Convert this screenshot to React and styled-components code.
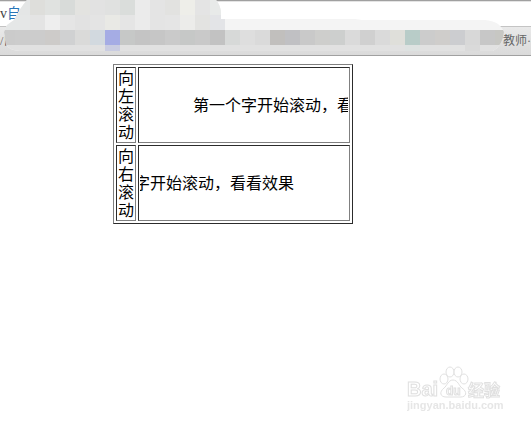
import styled, { createGlobalStyle } from "styled-components";

const GlobalStyle = createGlobalStyle`
  body {
    margin: 0;
    background: #fff;
    overflow: hidden;
  }
`;

const rows = [
  { name: "向左滚动", start: 53 },
  { name: "向右滚动", start: -54 },
];

const message = "第一个字开始滚动，看看效果";

const tileRows = [
  [
    "#e4e6e6", "#e4e6e6", "#dededb", "#e0e2e0", "#d8dbd9", "#e3e3e0", "#e2e2e2",
    "#e0e1e0", "#dadddb", "#ebebeb", "#e4e4e4", "#e2e2e0", "#eeeee9", "#e4e4e4",
    "#e8eae9",
  ],
  [
    "#e5e7e7", "#e5e7e7", "#e4e4e4", "#eeeeee", "#e5e5e5", "#e2e2e2", "#e4e4e4",
    "#e9e9e5", "#e5e5e5", "#ebebeb", "#e4e4e4", "#e5e5e5", "#ececea", "#e3e3e1",
    "#e3e4e7",
  ],
  [
    "#cbcbcb", "#cccccc", "#cccccc", "#cdcbc9", "#d0d1d2", "#dadad9", "#d2d9df",
    "#a5ace4", "#c6c8c7", "#c4c4c4", "#c6c6c6", "#cacaca", "#c6c8c7", "#c9c9c9",
    "#c2c2c2", "#d7d9d8", "#dedede", "#dadada", "#c1bfbd", "#c0c0c3", "#c9c9c9",
    "#cececc", "#cdcfce", "#dadada", "#d0d0d0", "#dadada", "#dfdfda", "#b8ccc8",
    "#cccccc", "#cfcdcb", "#cccdd0", "#d8d8d8", "#c7c7c7", "#c7c7c3",
  ],
];

function App() {
  return (
    <>
      <GlobalStyle />
      <Browser>
        <AddressBar>v<Blue>自</Blue></AddressBar>
        <Bookmarks>
          <span>/自</span>
          <span>教师·</span>
        </Bookmarks>
        <Mosaic />
      </Browser>
      <Content>
        <ScrollTable>
          <tbody>
            {rows.map((row) => (
              <tr key={row.name}>
                <NameCell scope="row">{row.name}</NameCell>
                <TextCell>
                  <Track>
                    <Message $start={row.start}>{message}</Message>
                  </Track>
                </TextCell>
              </tr>
            ))}
          </tbody>
        </ScrollTable>
      </Content>
      <Watermark />
    </>
  );
}

function Mosaic() {
  return (
    <MosaicArt viewBox="0 0 531 56" aria-hidden="true">
      <clipPath id="smear">
        <path d="M27 0H216Q221 6 221 13V19H355L362 20H485Q500 21 504 32Q503 45 493 51H20Q8 50 6 44L4 32L7 25L14 20Q20 8 27 0Z" />
      </clipPath>
      <g clipPath="url(#smear)">
        <rect width="531" height="56" fill="#f4f4f4" />
        {tileRows.map((tiles, y) =>
          tiles.map((fill, x) => (
            <rect key={`${x}-${y}`} x={x * 15} y={y * 15} width="15" height="15" fill={fill} />
          ))
        )}
        <rect y="45" width="531" height="11" fill="#e1e1e1" />
        <rect x="105" y="45" width="15" height="6" fill="#c9cce1" />
        <rect x="405" y="45" width="15" height="6" fill="#dde2e1" />
        <rect x="465" y="45" width="15" height="6" fill="#dadada" />
      </g>
    </MosaicArt>
  );
}

function Watermark() {
  return (
    <Mark viewBox="0 0 100 50" aria-hidden="true">
      <g fill="#fff" stroke="#e0e0e0">
        <text x="0" y="30" fontSize="20" fontWeight="700">Bai</text>
        <path d="M46 14C51 14 52 20 55 22C61 26 59 31 54 31H39C33 31 32 26 37 22C40 20 41 14 46 14Z" />
        <ellipse cx="37" cy="13" rx="4" ry="5" />
        <ellipse cx="43" cy="6" rx="4" ry="5" />
        <ellipse cx="51" cy="6" rx="4" ry="5" />
        <ellipse cx="57" cy="13" rx="4" ry="5" />
        <text x="39" y="29" fontSize="12" fontWeight="700">du</text>
        <text x="61" y="30" fontSize="16" fontWeight="700">经验</text>
      </g>
      <text x="0" y="43" fontSize="11" fontWeight="700" fill="#e6e6e6">jingyan.baidu.com</text>
    </Mark>
  );
}

const Browser = styled.header`
  position: relative;
  font-family: "Liberation Serif", "Noto Sans CJK SC", serif;
`;

const AddressBar = styled.div`
  box-sizing: border-box;
  height: 27px;
  border-top: 1px solid #a0a0a0;
  border-bottom: 1px solid #c4c4c4;
  box-shadow: inset 0 1px #e4e4e4;
  color: #444;
  font-size: 14px;
  line-height: 26px;
`;

const Blue = styled.span`
  color: #2875b8;
`;

const Bookmarks = styled.nav`
  box-sizing: border-box;
  display: flex;
  justify-content: space-between;
  height: 29px;
  border-bottom: 1px solid #a0a0a0;
  background: linear-gradient(#e9e9e9, #dadada);
  color: #666;
  font-size: 12px;
  line-height: 28px;
`;

const MosaicArt = styled.svg`
  position: absolute;
  top: 0;
  left: 0;
  width: 531px;
  height: 56px;
`;

const Content = styled.main`
  padding-top: 8px;
  padding-right: 65px;
`;

const ScrollTable = styled.table`
  width: 240px;
  margin: 0 auto;
  border: 1px solid;
  border-color: #808080 #2c2c2c #2c2c2c #808080;
  border-spacing: 2px;
  color: #000;
  font: 16px/18px "Noto Sans CJK SC", sans-serif;
`;

const NameCell = styled.th`
  width: 16px;
  padding: 0 1px 2px;
  border: 1px solid;
  border-color: #2c2c2c #808080 #808080 #2c2c2c;
  font-weight: 400;
`;

const TextCell = styled.td`
  padding: 0 1px 2px;
  border: 1px solid;
  border-color: #2c2c2c #808080 #808080 #2c2c2c;
`;

const Track = styled.div`
  width: 208px;
  overflow: hidden;
  white-space: nowrap;
`;

const Message = styled.div`
  text-indent: ${(props) => props.$start}px;
`;

const Mark = styled.svg`
  position: fixed;
  right: 24px;
  bottom: 8px;
  width: 100px;
  height: 50px;
  font-family: "Liberation Sans", "Noto Sans CJK SC", sans-serif;
`;

export default App;
